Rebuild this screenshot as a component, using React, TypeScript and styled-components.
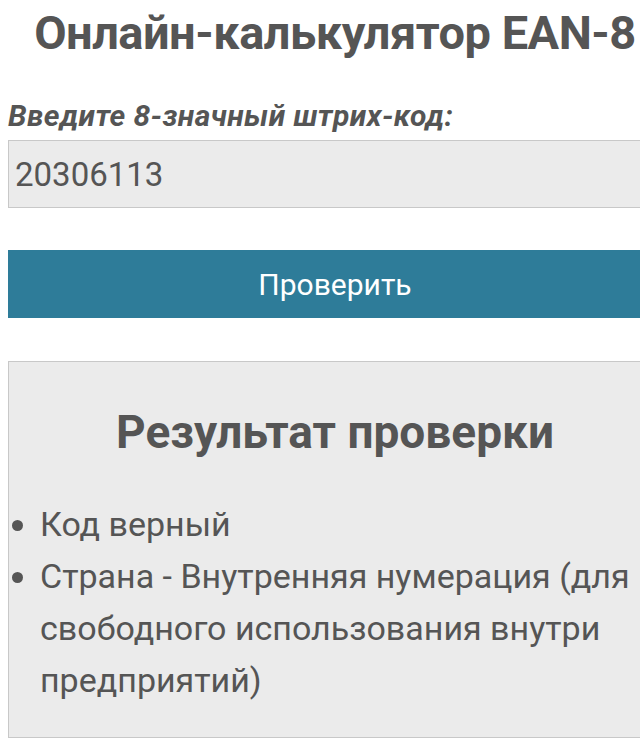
import React, { useState } from "react";
import styled, { createGlobalStyle } from "styled-components";

const GlobalStyle = createGlobalStyle`
  html, body {
    margin: 0;
    padding: 0;
    background: #fff;
    overflow: hidden;
  }
  body {
    font-family: Roboto, "Noto Sans", sans-serif;
    color: #555;
  }
`;

// the page is wider than the window, the right edge is cut off
const Page = styled.div`
  width: 654px;
  padding: 0 0 0 8px;
`;

const Title = styled.h1`
  margin: 0;
  padding-top: 6px;
  font-size: 47px;
  line-height: 54px;
  font-weight: 700;
  letter-spacing: -0.5px;
  text-align: center;
  color: #555;
`;

const Label = styled.label`
  display: block;
  margin-top: 39px;
  font-size: 30px;
  line-height: 34px;
  font-weight: 700;
  font-style: italic;
  letter-spacing: 0.4px;
`;

const CodeInput = styled.input`
  display: block;
  box-sizing: border-box;
  width: 100%;
  height: 68px;
  margin-top: 7px;
  padding: 0 6px;
  border: 1px solid #c8c8c8;
  background: #ebebeb;
  font-family: Roboto, sans-serif;
  font-size: 33px;
  color: #555;
  outline: none;
`;

const CheckButton = styled.button`
  display: block;
  width: 100%;
  height: 68px;
  margin-top: 42px;
  border: none;
  background: #2e7c99;
  color: #fff;
  font-family: Roboto, sans-serif;
  font-size: 30px;
  cursor: pointer;
`;

const ResultBox = styled.section`
  box-sizing: border-box;
  margin-top: 43px;
  height: 377px;
  border: 1px solid #c8c8c8;
  background: #ebebeb;
  padding-top: 40px;
`;

const ResultTitle = styled.h2`
  margin: 0;
  font-size: 46px;
  line-height: 60px;
  font-weight: 700;
  text-align: center;
`;

const List = styled.ul`
  margin: 36px 0 0 0;
  padding: 0 0 0 31px;
`;

const Item = styled.li`
  font-size: 34px;
  line-height: 52px;
`;

export default function App() {
  const [code, setCode] = useState("20306113");
  return (
    <>
      <GlobalStyle />
      <Page>
        <Title>Онлайн-калькулятор EAN-8</Title>
        <Label htmlFor="code">Введите 8-значный штрих-код:</Label>
        <CodeInput id="code" value={code} onChange={(e) => setCode(e.target.value)} />
        <CheckButton>Проверить</CheckButton>
        <ResultBox>
          <ResultTitle>Результат проверки</ResultTitle>
          <List>
            <Item>Код верный</Item>
            <Item>Страна - Внутренняя нумерация (для свободного использования внутри предприятий)</Item>
          </List>
        </ResultBox>
      </Page>
    </>
  );
}
